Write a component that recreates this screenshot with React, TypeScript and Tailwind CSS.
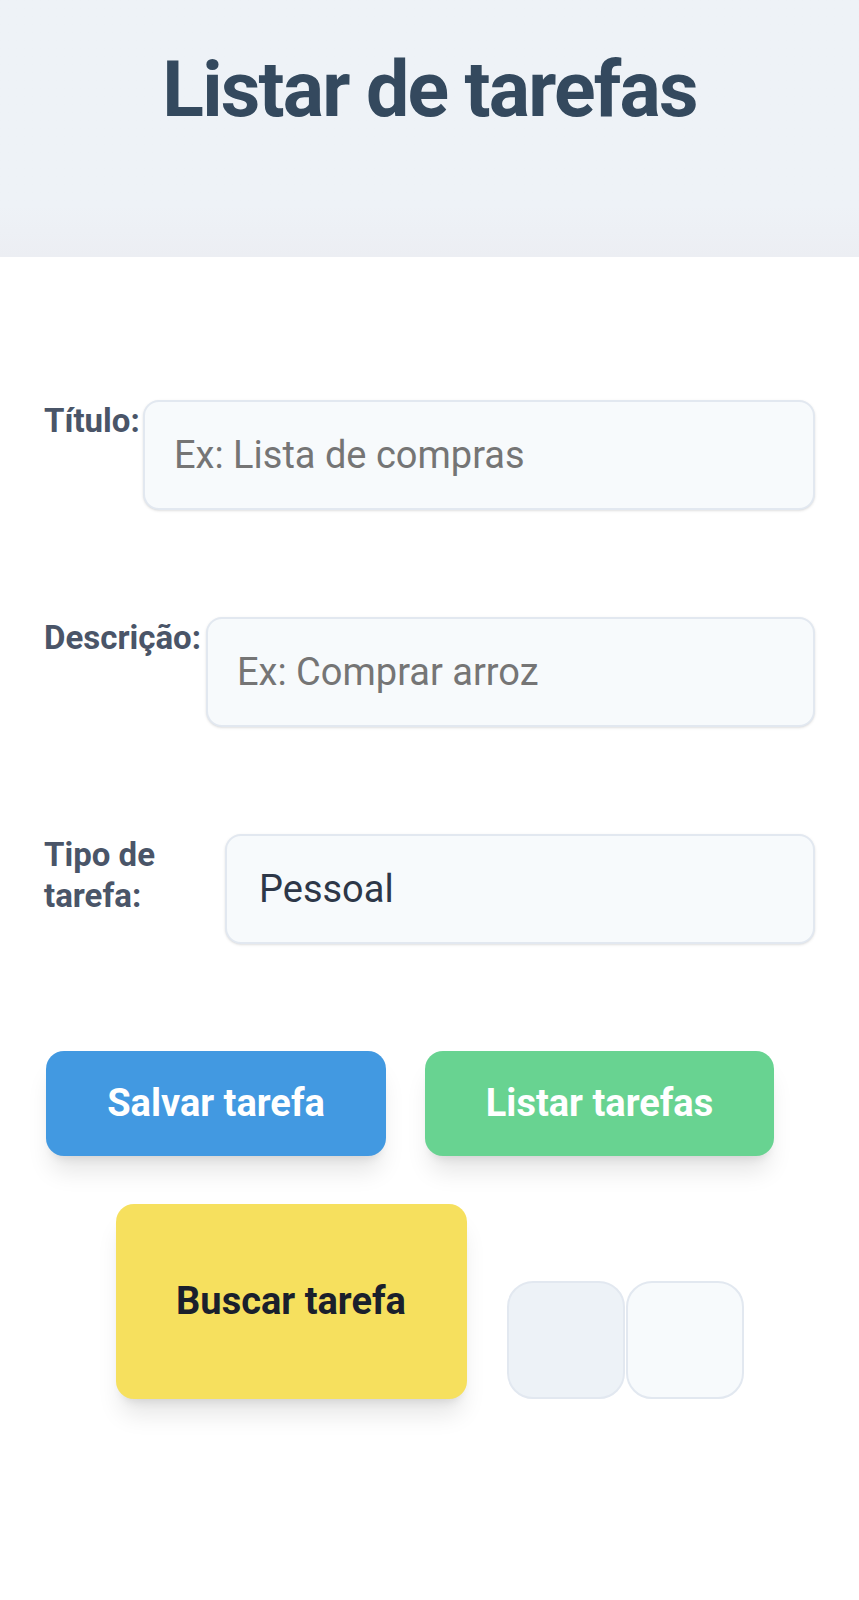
import { useState } from 'react';

export default function App() {
  const [tipo, setTipo] = useState('Pessoal');

  return (
    <div className="min-h-screen bg-white font-['Roboto',sans-serif]">
      <header className="h-[257px] bg-gradient-to-b from-[#eef2f7] via-[#eef2f7] via-80% to-[#eceef3] pt-[52px]">
        <h1 className="text-center text-[77px] font-bold leading-none tracking-[-1.8px] text-[#34495e]">Listar de tarefas</h1>
      </header>

      <form className="px-[44px] pt-[143px]" onSubmit={(e) => e.preventDefault()}>
        <div className="mb-[107px] flex items-start">
          <label className="w-[99px] shrink-0 text-[33px] font-bold leading-[41px] text-[#4a5568]">Título:</label>
          <input
            placeholder="Ex: Lista de compras"
            className="h-[110px] flex-1 rounded-[16px] border-2 border-[#e2e8f0] bg-[#f7fafc] pl-[29px] text-[38px] text-[#2d3748] shadow-sm outline-none placeholder:text-[#757575]"
          />
        </div>

        <div className="mb-[107px] flex items-start">
          <label className="w-[162px] shrink-0 text-[33px] font-bold leading-[41px] text-[#4a5568]">Descrição:</label>
          <input
            placeholder="Ex: Comprar arroz"
            className="h-[110px] flex-1 rounded-[16px] border-2 border-[#e2e8f0] bg-[#f7fafc] pl-[29px] text-[38px] text-[#2d3748] shadow-sm outline-none placeholder:text-[#757575]"
          />
        </div>

        <div className="mb-[107px] flex items-start">
          <label className="w-[181px] shrink-0 pr-[40px] text-[33px] font-bold leading-[41px] text-[#4a5568]">Tipo de tarefa:</label>
          <select
            value={tipo}
            onChange={(e) => setTipo(e.target.value)}
            className="h-[110px] flex-1 appearance-none rounded-[16px] border-2 border-[#e2e8f0] bg-[#f7fafc] pl-[32px] text-[38px] text-[#2d3748] shadow-sm outline-none"
          >
            <option>Pessoal</option>
            <option>Trabalho</option>
          </select>
        </div>

        <div className="flex gap-[39px] pl-[2px]">
          <button className="h-[105px] w-[340px] rounded-[18px] bg-[#4299e1] text-[38px] font-bold text-white shadow-xl">
            Salvar tarefa
          </button>
          <button className="h-[105px] w-[349px] rounded-[18px] bg-[#68d391] text-[38px] font-bold text-white shadow-xl">
            Listar tarefas
          </button>
        </div>

        <div className="mt-[48px] flex items-end justify-center">
          <button className="mr-[40px] h-[195px] w-[351px] rounded-[18px] bg-[#f6e05e] text-[38px] font-bold text-[#1a202c] shadow-xl">
            Buscar tarefa
          </button>
          <div className="h-[118px] w-[118px] rounded-[26px] border-2 border-[#e2e8f0] bg-[#edf2f7]" />
          <div className="ml-[1px] h-[118px] w-[118px] rounded-[26px] border-2 border-[#e2e8f0] bg-[#f7fafc]" />
        </div>
      </form>
    </div>
  );
}
